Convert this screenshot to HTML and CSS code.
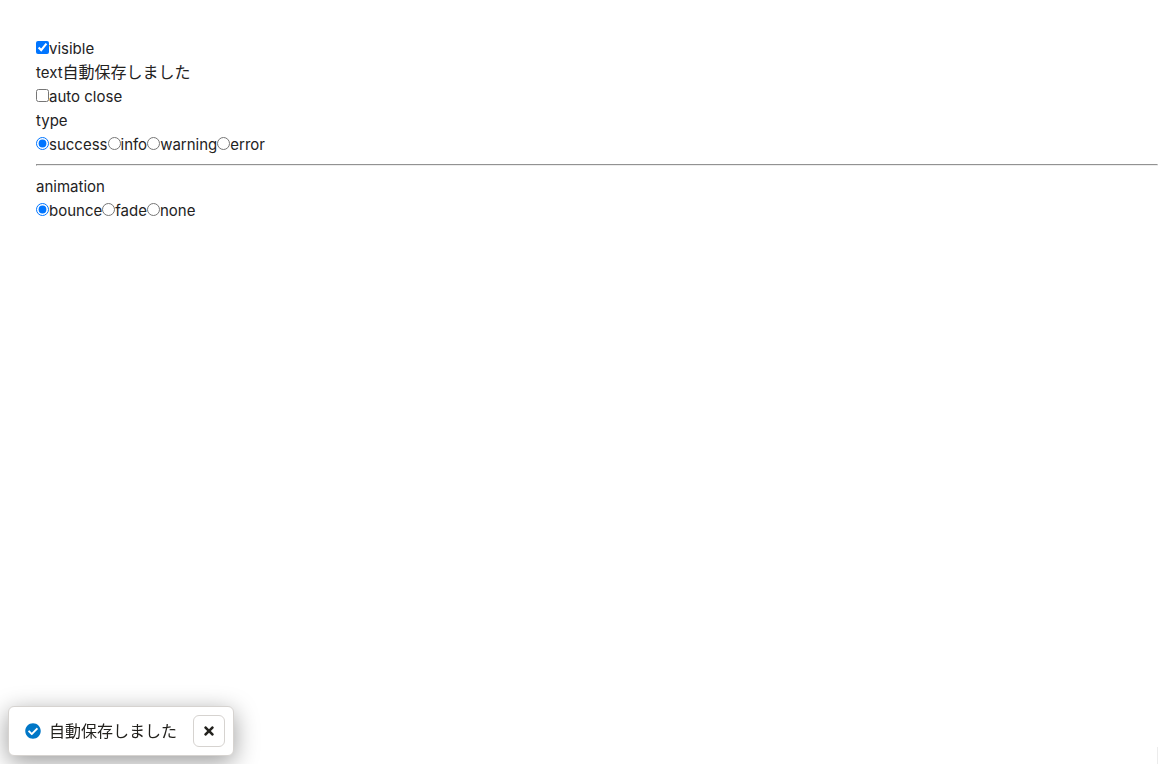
FILE: index.html
```html
<!DOCTYPE html>
<html lang="ja">
<head>
<meta charset="utf-8">
<title>Snackbar</title>
<link rel="stylesheet" href="styles.css">
</head>
<body>
<form class="controls">
  <div class="row"><label class="option"><input type="checkbox" checked>visible</label></div>
  <div class="row"><label for="message">text</label><input class="text-field" id="message" type="text" value="自動保存しました"></div>
  <div class="row"><label class="option"><input type="checkbox">auto close</label></div>
  <div id="type-title">type</div>
  <div class="row" role="radiogroup" aria-labelledby="type-title">
    <label class="option"><input type="radio" name="type" checked>success</label>
    <label class="option"><input type="radio" name="type">info</label>
    <label class="option"><input type="radio" name="type">warning</label>
    <label class="option"><input type="radio" name="type">error</label>
  </div>
  <hr class="divider">
  <div id="animation-title">animation</div>
  <div class="row" role="radiogroup" aria-labelledby="animation-title">
    <label class="option"><input type="radio" name="animation" checked>bounce</label>
    <label class="option"><input type="radio" name="animation">fade</label>
    <label class="option"><input type="radio" name="animation">none</label>
  </div>
</form>
<div class="toast" role="status">
  <svg class="toast-icon" viewBox="0 0 512 512" aria-hidden="true"><path fill="#0077c7" d="M504 256c0 137-111 248-248 248S8 393 8 256 119 8 256 8s248 111 248 248zM227.300 387.300l184-184c6.200-6.200 6.200-16.400 0-22.600l-22.600-22.600c-6.200-6.200-16.400-6.200-22.600 0L216 308.100l-70.100-70.100c-6.200-6.200-16.400-6.200-22.600 0l-22.600 22.600c-6.200 6.200-6.200 16.400 0 22.600l104 104c6.200 6.300 16.400 6.300 22.600.1z"/></svg>
  <span class="toast-text">自動保存しました</span>
  <button class="toast-close" type="button" aria-label="閉じる">
    <svg class="close-icon" viewBox="0 0 352 512" aria-hidden="true"><path fill="currentColor" d="M242.700 256l100.100-100.100c12.300-12.300 12.300-32.200 0-44.500l-22.200-22.200c-12.300-12.300-32.200-12.300-44.500 0L176 189.300 75.900 89.200c-12.300-12.300-32.200-12.300-44.500 0L9.200 111.500c-12.300 12.300-12.300 32.200 0 44.500L109.300 256 9.200 356.100c-12.300 12.300-12.300 32.200 0 44.500l22.200 22.200c12.300 12.300 32.200 12.300 44.500 0L176 322.700l100.100 100.100c12.300 12.300 32.200 12.300 44.500 0l22.200-22.200c12.300-12.300 12.300-32.200 0-44.500L242.700 256z"/></svg>
  </button>
</div>
<div class="edge-mark" aria-hidden="true"></div>
</body>
</html>
```
FILE: styles.css
```css
* { box-sizing: border-box; }
body {
  margin: 0;
  background: #fff;
  color: #23221e;
  font: 15px/24px Inter, "Noto Sans CJK JP", sans-serif;
}
.controls { padding: 37px 0 0 36px; }
.row { display: flex; height: 24px; }
.option { display: flex; align-items: center; }
.option input { width: 13px; height: 13px; margin: 0 0 4px; accent-color: #0075ff; }
.text-field {
  width: 200px;
  height: 22px;
  padding: 0;
  border: 0;
  background: none;
  color: inherit;
  font: inherit;
  font-size: 16px;
}
.divider {
  margin: 7px 0 9px;
  border: 1px solid;
  border-color: #929292 #ededed #ededed #929292;
}
.toast {
  position: fixed;
  left: 8px;
  bottom: 8px;
  display: flex;
  align-items: center;
  padding: 8px 8px 8px 16px;
  border: 1px solid #d6d3d0;
  border-radius: 6px;
  background: #fff;
  box-shadow: 0 6px 24px rgba(0, 0, 0, 0.4);
}
.toast-icon { width: 16px; height: 16px; margin-right: 8px; }
.toast-text { margin-right: 16px; font-size: 16px; }
.toast-close {
  display: flex;
  align-items: center;
  justify-content: center;
  width: 32px;
  height: 32px;
  padding: 0;
  border: 1px solid #d6d3d0;
  border-radius: 6px;
  background: #fff;
  color: #23221e;
}
.close-icon { width: 10px; height: 14px; }
.edge-mark {
  position: fixed;
  right: 0;
  bottom: 0;
  width: 1px;
  height: 17px;
  background: #ececec;
}
```
